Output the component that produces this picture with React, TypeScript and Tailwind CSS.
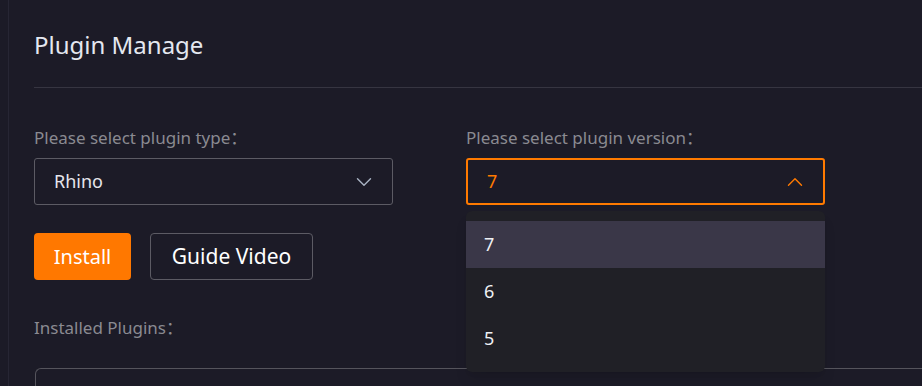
import { ChevronDown, ChevronUp } from 'lucide-react';

const font = { fontFamily: '"Noto Sans", "Open Sans", "Noto Sans CJK SC", sans-serif' };

function SelectBox({ value, open }: { value: string; open?: boolean }) {
  return (
    <div
      className={`flex h-[47px] w-[359px] items-center justify-between rounded-[3px] border pl-[19px] pr-[15px] text-[18px] ${
        open ? 'border-2 border-[#ff7a00] pl-[18px] pr-[14px] text-[#ff7a00]' : 'border-[#5c5b64] text-[#e6e6ec]'
      }`}
    >
      <span>{value}</span>
      {open ? (
        <ChevronUp size={26} strokeWidth={1.3} className="text-[#ff7a00]" />
      ) : (
        <ChevronDown size={26} strokeWidth={1.3} className="text-[#a9b3c3]" />
      )}
    </div>
  );
}

export default function App() {
  const versions = ['7', '6', '5'];
  return (
    <div className="h-[386px] w-full overflow-hidden bg-[#1c1b27] pl-2" style={font}>
      <div className="h-full border-l border-[#272634] pl-[25px]">
        <h1 className="pt-[29px] text-[24px] leading-[32px] text-[#e4e8f0]">Plugin Manage</h1>
        <div className="mt-[26px] h-px bg-[#363541]" />

        <div className="mt-[38px] grid grid-cols-[432px_432px]">
          <div>
            <p className="text-[17px] leading-[24px] text-[#8a8a91]">Please select plugin type：</p>
            <div className="mt-[8px]">
              <SelectBox value="Rhino" />
            </div>
          </div>
          <div>
            <p className="text-[17px] leading-[24px] text-[#8a8a91]">Please select plugin version：</p>
            <div className="relative mt-[8px]">
              <SelectBox value="7" open />
              <ul className="absolute left-0 top-[53px] z-10 w-[359px] rounded-[6px] bg-[#202026] py-[10px] shadow-lg">
                {versions.map((v, i) => (
                  <li
                    key={v}
                    className={`flex h-[47px] items-center pl-[18px] text-[18px] text-[#eef0f4] ${
                      i === 0 ? 'bg-[#3a3748]' : ''
                    }`}
                  >
                    {v}
                  </li>
                ))}
              </ul>
            </div>
          </div>
        </div>

        <div className="mt-[28px] flex gap-[19px]">
          <button className="h-[47px] w-[97px] rounded-[4px] bg-[#ff7800] text-[20px] text-white">
            Install
          </button>
          <button className="h-[47px] w-[163px] rounded-[4px] border border-[#5c5b64] text-[21px] text-white">
            Guide Video
          </button>
        </div>

        <p className="mt-[36px] text-[17px] leading-[24px] text-[#8a8a91]">Installed Plugins：</p>

        <div className="mt-[28px] ml-px w-[1000px] rounded-tl-[6px] border-l border-t border-[#55545c]">
          <div className="grid grid-cols-[256px_244px_200px] pl-[36px] pt-[14px] text-[16px] text-[#e6e6ec]">
            <span>Type</span>
            <span>Version</span>
            <span>Path</span>
          </div>
        </div>
      </div>
    </div>
  );
}
